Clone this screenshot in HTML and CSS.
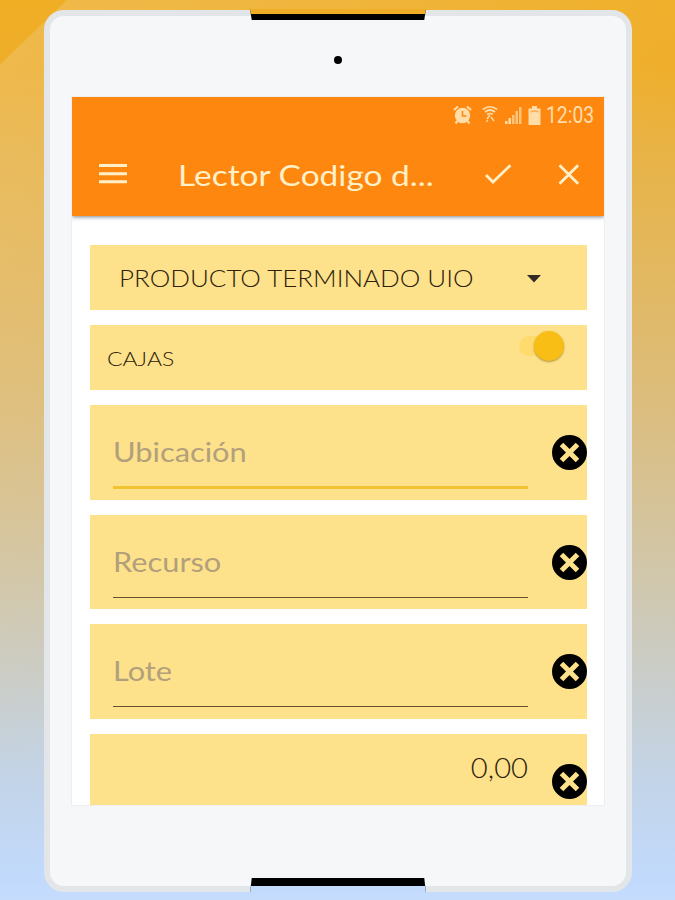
FILE: index.html
```
<!DOCTYPE html>
<html lang="es">
  <head>
    <meta charset="utf-8">
    <title>Lector Codigo de Barras</title>
    <link rel="stylesheet" href="styles.css">
  </head>
  <body>
    <div class="tablet">
      <div class="notch notch-top"></div>
      <div class="camera"></div>
      <div class="screen">
        <header>
          <div class="status-bar">
            <svg class="alarm" width="19" height="20" viewBox="0 0 19 20">
              <circle cx="9.5" cy="10.5" r="7.7" fill="currentColor"/>
              <path d="M1 5l4-3.500M18 5l-4-3.500M4.500 16l-2 2.500M14.500 16l2 2.500" stroke="currentColor" stroke-width="2.200"/>
              <path d="M9.500 6v5h4" fill="none" stroke="#fd870f" stroke-width="1.600"/>
            </svg>
            <svg class="wifi" width="16" height="20" viewBox="0 0 16 20" fill="none" stroke="currentColor" stroke-width="1.700">
              <path d="M.8 4.500Q8-1 15.200 4.500M3 7Q8 3 13 7M5.200 9.500Q8 7.500 10.800 9.500"/>
              <path d="M8 10l-3 4M5.500 15l-1 2M9 12l3 4" stroke-width="1.400"/>
            </svg>
            <svg class="signal" width="17" height="18" viewBox="0 0 17 18" fill="currentColor">
              <path d="M0 15h2.500v3H0zM3.500 12H6v6H3.500z"/>
              <path d="M7 9h2.500v9H7zM10.500 5H13v13h-2.500zM14 1h2.500v17H14z" opacity=".7"/>
            </svg>
            <svg class="battery" width="13" height="19" viewBox="0 0 13 19">
              <path d="M4 0h5v2.500h3.500V19H.5V2.500H4z" fill="currentColor"/>
              <path d="M2.500 6q4-2 8 0" fill="none" stroke="#fdaa55" stroke-width="1.500"/>
            </svg>
            <span class="clock">12:03</span>
          </div>
          <div class="toolbar">
            <svg class="menu-icon" width="28" height="20" viewBox="0 0 28 20">
              <path d="M0 1.600h28M0 9.700h28M0 17.800h28" stroke="currentColor" stroke-width="3"/>
            </svg>
            <h1>Lector Codigo d...</h1>
            <svg class="check-icon" width="27" height="20" viewBox="0 0 27 20">
              <path d="M1 11l7 7L25.500 1.200" fill="none" stroke="currentColor" stroke-width="2.800"/>
            </svg>
            <svg class="close-icon" width="22" height="21" viewBox="0 0 22 21">
              <path d="M1.500 1.200l18.600 18.600M20.100 1.200L1.500 19.800" stroke="currentColor" stroke-width="2.800"/>
            </svg>
          </div>
        </header>

        <main>
          <div class="card select">
            <span class="text option">PRODUCTO TERMINADO UIO</span>
            <svg class="arrow" width="14" height="8" viewBox="0 0 14 8"><path d="M0 0h14L7 7.500z" fill="#302c25"/></svg>
          </div>
          <div class="card toggle">
            <span class="text label">CAJAS</span>
            <div class="switch"><div class="knob"></div></div>
          </div>
          <div class="card field active">
            <div class="input"><span class="text">Ubicación</span></div>
            <svg class="clear" viewBox="0 0 35 35"><circle cx="17.500" cy="17.500" r="17.500"/><path d="M9.500 9.500l16 16M25.500 9.500l-16 16"/></svg>
          </div>
          <div class="card field">
            <div class="input"><span class="text">Recurso</span></div>
            <svg class="clear" viewBox="0 0 35 35"><circle cx="17.500" cy="17.500" r="17.500"/><path d="M9.500 9.500l16 16M25.500 9.500l-16 16"/></svg>
          </div>
          <div class="card field">
            <div class="input"><span class="text">Lote</span></div>
            <svg class="clear" viewBox="0 0 35 35"><circle cx="17.500" cy="17.500" r="17.500"/><path d="M9.500 9.500l16 16M25.500 9.500l-16 16"/></svg>
          </div>
          <div class="card field">
            <div class="input amount"><span class="text">0,00</span></div>
            <svg class="clear" viewBox="0 0 35 35"><circle cx="17.500" cy="17.500" r="17.500"/><path d="M9.500 9.500l16 16M25.500 9.500l-16 16"/></svg>
          </div>
        </main>
      </div>
      <div class="notch notch-bottom"></div>
    </div>
  </body>
</html>
```
FILE: styles.css
```
*{
  box-sizing: border-box;
}
body{
  margin: 0;
  height: 900px;
  overflow: hidden;
  padding: 10px 0 0 44px;
  font-family: Lato, "Open Sans", sans-serif;
  background:
    linear-gradient(136deg, transparent 46px, rgba(238, 205, 140, .35) 47px, transparent 560px),
    linear-gradient(#f0ae25 0, #efae2a 70px, #e8b346 150px, #dcbd7c 400px, #cfc8b2 600px, #c3d4e8 780px, #c1dafc 880px, #c5dcfd 900px);
}
svg{
  display: block;
  flex: none;
}
.tablet{
  position: relative;
  width: 588px;
  height: 882px;
  border: 6px solid #e2e6e8;
  border-radius: 20px;
  background: #f5f7f9;
  padding: 81px 22px 0;
}
.notch{
  position: absolute;
  left: 200px;
  width: 176px;
}
.notch-top{
  top: -7px;
  height: 11px;
  border-top: 5px solid #f0ae27;
  background: #000;
  clip-path: polygon(0 0, 100% 0, 99% 100%, 1% 100%);
}
.notch-bottom{
  bottom: -7px;
  height: 15px;
  border-bottom: 7px solid #c2dafc;
  background: #000;
  clip-path: polygon(1% 0, 99% 0, 100% 100%, 0 100%);
}
.camera{
  position: absolute;
  left: 284px;
  top: 40px;
  width: 8px;
  height: 8px;
  border-radius: 50%;
  background: #000;
}
.screen{
  width: 532px;
  height: 708px;
  overflow: hidden;
  background: #fff;
  box-shadow: 0 0 0 1px #eceef1;
}

/* app bar */
header{
  height: 119px;
  background: #fd870f;
  color: #fff0c8;
  box-shadow: 0 1px 4px rgba(60, 70, 80, .65);
}
.status-bar{
  display: flex;
  align-items: center;
  height: 36px;
  padding-left: 381px;
  color: #ffdda8;
}
.wifi{
  margin-left: 10px;
}
.signal{
  margin-left: 7px;
}
.battery{
  margin-left: 6px;
}
.clock{
  margin-left: 5px;
  font-family: Roboto, sans-serif;
  font-size: 23px;
  transform: scaleX(.84);
  transform-origin: left;
}
.toolbar{
  display: flex;
  align-items: center;
  height: 83px;
  padding: 0 24px 1px 27px;
}
h1{
  width: 254px;
  margin: 0 0 0 51px;
  font-size: 29.5px;
  font-weight: 400;
  white-space: nowrap;
  transform: scaleX(1.135);
  transform-origin: left;
}
.check-icon{
  margin-left: 53px;
}
.close-icon{
  margin-left: 46px;
}

/* form */
main{
  display: flex;
  flex-direction: column;
  gap: 15px;
  padding: 29px 17px 0 18px;
}
.card{
  display: flex;
  flex: none;
  background: #fde18b;
}
.text{
  display: block;
  white-space: nowrap;
  transform: scaleX(1.14);
  transform-origin: left;
}
.select{
  align-items: center;
  height: 65px;
  padding-left: 29px;
  color: #2e210c;
}
.option{
  width: 408px;
  font-size: 24px;
  font-weight: 300;
  transform: scaleX(1.082);
}
.arrow{
  margin-top: 2px;
}
.toggle{
  align-items: center;
  height: 65px;
  padding-left: 17px;
  color: #2e210c;
}
.label{
  width: 412px;
  font-size: 20.5px;
  font-weight: 300;
  transform: scaleX(1.12);
}
.switch{
  width: 45px;
  height: 20px;
  margin-bottom: 23px;
  border-radius: 10px;
  background: #ffda6d;
  display: flex;
  align-items: center;
  justify-content: flex-end;
}
.knob{
  width: 30px;
  height: 30px;
  border-radius: 50%;
  background: #f8be15;
  box-shadow: 0 1px 2px rgba(100, 80, 0, .5);
}
.field{
  height: 94.7px;
  padding-left: 23px;
  align-items: center;
}
.input{
  width: 415px;
  height: 71px;
  padding-top: 18px;
  border-bottom: 1px solid #66502f;
  font-size: 27px;
  color: #b29f7c;
}
.active .input{
  height: 73px;
  padding-top: 19px;
  border-bottom: 3px solid #f1c232;
}
.amount{
  padding-top: 5px;
  font-weight: 300;
  text-align: right;
  color: #2e210c;
}
.amount .text{
  transform: scaleX(1.08);
  transform-origin: right;
}
.clear{
  width: 35px;
  height: 35px;
  margin-left: 24px;
}
.clear path{
  stroke: #fde18b;
  stroke-width: 5;
}
```
